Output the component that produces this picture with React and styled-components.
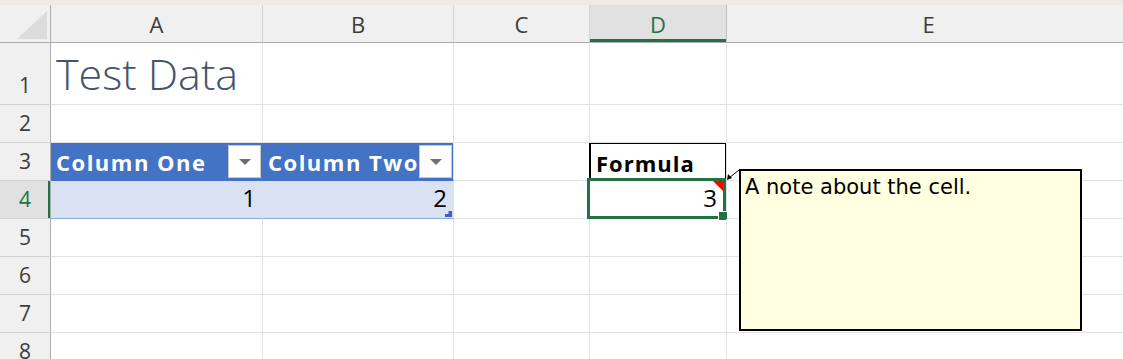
import React from "react";
import styled, { createGlobalStyle, css } from "styled-components";

const GREEN = "#217346";
const GRID = "#e1e1e1";
const HEAD_LINE = "#d4d4d4";
const HEAD_EDGE = "#acacac";

const GlobalStyle = createGlobalStyle`
  body {
    margin: 0;
    background: #ffffff;
    font-family: "Open Sans", "Liberation Sans", sans-serif;
    overflow: hidden;
  }
`;

const Window = styled.div`
  position: relative;
  width: 1123px;
  height: 359px;
  overflow: hidden;
  background: #ffffff;
`;

const TopStrip = styled.div`
  height: 5px;
  background: #efeae6;
`;

const Sheet = styled.div`
  display: grid;
  grid-template-columns: 51px 212px 191px 136px 137px 404px;
  grid-template-rows: 38px 62px repeat(7, 38px);
`;

const Corner = styled.div`
  position: relative;
  background: #f0f0f0;
  border-right: 1px solid ${HEAD_EDGE};
  border-bottom: 1px solid ${HEAD_EDGE};

  &::after {
    content: "";
    position: absolute;
    right: 3px;
    bottom: 3px;
    border-style: solid;
    border-width: 0 0 28px 30px;
    border-color: transparent transparent #dcdcdc transparent;
  }
`;

const ColHead = styled.div`
  display: flex;
  align-items: center;
  justify-content: center;
  background: #f0f0f0;
  border-right: 1px solid ${HEAD_LINE};
  border-bottom: 1px solid ${HEAD_EDGE};
  color: #3c3c3c;
  font-size: 22px;
  padding-top: 1px;

  ${(p) =>
    p.$active &&
    css`
      background: #e1e1e1;
      color: ${GREEN};
      border-right-color: #c2c2c2;
      box-shadow: inset 0 -3px 0 ${GREEN};
    `}
`;

const RowHead = styled.div`
  display: flex;
  align-items: flex-end;
  justify-content: center;
  padding-bottom: 7px;
  background: #f0f0f0;
  border-right: 1px solid ${HEAD_EDGE};
  border-bottom: 1px solid ${HEAD_LINE};
  color: #3c3c3c;
  font-size: 21px;
  line-height: 24px;

  ${(p) =>
    p.$active &&
    css`
      background: #e1e1e1;
      color: ${GREEN};
      box-shadow: inset -2px 0 0 ${GREEN};
    `}
`;

const Cell = styled.div`
  position: relative;
  display: flex;
  align-items: flex-end;
  justify-content: ${(p) => (p.$align === "right" ? "flex-end" : "flex-start")};
  padding: 0 6px 6px 5px;
  border-right: 1px solid ${GRID};
  border-bottom: 1px solid ${GRID};
  color: #000000;
  font-size: 24px;
  line-height: 28px;
  white-space: nowrap;
`;

const TitleCell = styled(Cell)`
  padding-bottom: 4px;
  font-size: 43px;
  font-weight: 300;
  line-height: 52px;
  color: #44546a;
  overflow: visible;
`;

const TableHead = styled.div`
  display: flex;
  align-items: center;
  gap: 2px;
  padding: 0 1px 0 5px;
  background: #4472c4;
  border-right: 1px solid ${(p) => (p.$last ? GRID : "#4472c4")};
  border-bottom: 1px solid #4472c4;
  color: #ffffff;
  font-size: 22px;
  font-weight: 700;
  letter-spacing: 1.5px;
  white-space: nowrap;
  overflow: hidden;
`;

const HeadLabel = styled.span`
  flex: 1;
  overflow: hidden;
`;

const FilterButton = styled.div`
  flex: 0 0 33px;
  height: 33px;
  box-sizing: border-box;
  display: flex;
  align-items: center;
  justify-content: center;
  background: #ffffff;
  border: 1px solid #c8c8c8;

  &::after {
    content: "";
    border-style: solid;
    border-width: 6px 6px 0 6px;
    border-color: #707070 transparent transparent transparent;
  }
`;

const TableCell = styled(Cell)`
  background: #d9e1f2;
  border-right-color: ${(p) => (p.$last ? GRID : "#d9e1f2")};
  border-bottom-color: #8ea9db;
`;

const ResizeHandle = styled.span`
  position: absolute;
  right: 1px;
  bottom: 1px;
  width: 7px;
  height: 6px;
  background: #3f5fc4;
  clip-path: polygon(100% 0, 100% 100%, 0 100%, 0 50%, 50% 50%, 50% 0);
`;

const FormulaCell = styled(Cell)`
  align-items: center;
  padding: 2px 6px 0 6px;
  box-shadow: inset 0 0 0 1px #000000, -1px 0 0 #000000;
  font-size: 22px;
  font-weight: 700;
  letter-spacing: 1px;
`;

const SelectedCell = styled(Cell)`
  padding-right: 9px;

  &::before {
    content: "";
    position: absolute;
    inset: -3px 0 -1px -3px;
    border: 3px solid ${GREEN};
    pointer-events: none;
  }
`;

const NoteMark = styled.span`
  position: absolute;
  top: 0;
  right: 3px;
  border-style: solid;
  border-width: 0 10px 10px 0;
  border-color: transparent #ff0000 transparent transparent;
`;

const FillHandle = styled.span`
  position: absolute;
  right: -1px;
  bottom: -2px;
  width: 8px;
  height: 8px;
  background: ${GREEN};
  outline: 1px solid #ffffff;
`;

const Note = styled.div`
  position: absolute;
  left: 739px;
  top: 169px;
  width: 343px;
  height: 162px;
  box-sizing: border-box;
  padding: 2px 4px;
  background: #ffffe1;
  border: 2px solid #000000;
  font-family: "DejaVu Sans", "Liberation Sans", sans-serif;
  font-size: 21px;
  line-height: 28px;
  color: #000000;
`;

const Connector = styled.svg`
  position: absolute;
  left: 720px;
  top: 164px;
  overflow: visible;
`;

const columns = [
  { key: "A" },
  { key: "B" },
  { key: "C" },
  { key: "D", active: true },
  { key: "E" },
];

function EmptyRow({ n }) {
  return (
    <>
      <RowHead>{n}</RowHead>
      {columns.map((c) => (
        <Cell key={c.key} />
      ))}
    </>
  );
}

export default function App() {
  return (
    <Window>
      <GlobalStyle />
      <TopStrip />
      <Sheet>
        <Corner />
        {columns.map((c) => (
          <ColHead key={c.key} $active={c.active}>
            {c.key}
          </ColHead>
        ))}

        <RowHead>1</RowHead>
        <TitleCell>Test Data</TitleCell>
        <Cell />
        <Cell />
        <Cell />
        <Cell />

        <EmptyRow n={2} />

        <RowHead>3</RowHead>
        <TableHead>
          <HeadLabel>Column One</HeadLabel>
          <FilterButton />
        </TableHead>
        <TableHead $last>
          <HeadLabel>Column Two</HeadLabel>
          <FilterButton />
        </TableHead>
        <Cell />
        <FormulaCell>Formula</FormulaCell>
        <Cell />

        <RowHead $active>4</RowHead>
        <TableCell $align="right">1</TableCell>
        <TableCell $align="right" $last>
          2
          <ResizeHandle />
        </TableCell>
        <Cell />
        <SelectedCell $align="right">
          3
          <NoteMark />
          <FillHandle />
        </SelectedCell>
        <Cell />

        <EmptyRow n={5} />
        <EmptyRow n={6} />
        <EmptyRow n={7} />
        <EmptyRow n={8} />
      </Sheet>

      <Connector width="20" height="20">
        <line x1="19" y1="6" x2="9" y2="14" stroke="#000" strokeWidth="1" />
        <polygon points="7,16 8,10 12,14" fill="#000" />
      </Connector>
      <Note>A note about the cell.</Note>
    </Window>
  );
}
